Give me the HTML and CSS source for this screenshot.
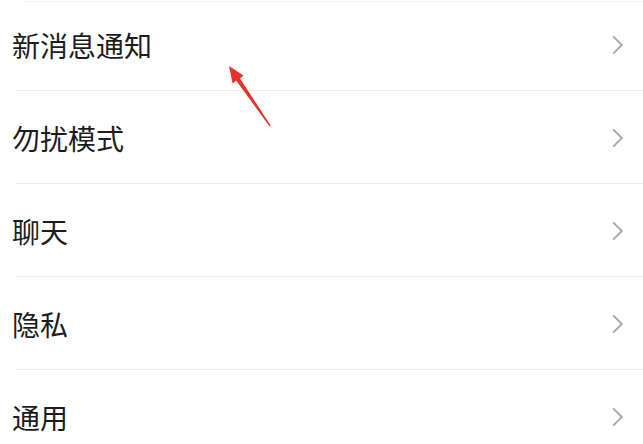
FILE: index.html
```html
<!DOCTYPE html>
<html lang="zh-CN">
<head>
  <meta charset="UTF-8">
  <meta name="viewport" content="width=device-width, initial-scale=1.0">
  <title>设置</title>
  <link rel="stylesheet" href="styles.css">
</head>
<body>
  <!-- 设置列表 -->
  <ul class="settings">
    <li class="item">
      <span class="label">新消息通知</span>
      <svg class="chevron" viewBox="0 0 12 20"><path d="M2 2 L10 10 L2 18"/></svg>
    </li>
    <li class="item">
      <span class="label">勿扰模式</span>
      <svg class="chevron" viewBox="0 0 12 20"><path d="M2 2 L10 10 L2 18"/></svg>
    </li>
    <li class="item">
      <span class="label">聊天</span>
      <svg class="chevron" viewBox="0 0 12 20"><path d="M2 2 L10 10 L2 18"/></svg>
    </li>
    <li class="item">
      <span class="label">隐私</span>
      <svg class="chevron" viewBox="0 0 12 20"><path d="M2 2 L10 10 L2 18"/></svg>
    </li>
    <li class="item">
      <span class="label">通用</span>
      <svg class="chevron" viewBox="0 0 12 20"><path d="M2 2 L10 10 L2 18"/></svg>
    </li>
  </ul>

  <!-- 红色标注箭头 -->
  <svg class="pointer" viewBox="0 0 60 80" width="60" height="80">
    <polygon points="9,6 23.5,15.6 20,18.4 50.6,65.6 49.6,66.4 16.2,20.6 12.6,23.4" fill="#e8312b"/>
  </svg>
</body>
</html>
```

FILE: styles.css
```css
* {
  margin: 0;
  padding: 0;
  box-sizing: border-box;
}
body {
  font-family: "Noto Sans CJK SC", "Noto Sans", sans-serif;
  background: #fff;
  color: #1c1c1c;
  position: relative;
  overflow: hidden;
  height: 444px;
}
.settings {
  list-style: none;
  margin-top: -2px;
  position: relative;
}
/* 顶部残留的淡分割线 */
.settings::before {
  content: "";
  position: absolute;
  left: 24px;
  right: 0;
  top: 3px;
  height: 1px;
  background: #f4f4f4;
}
.item {
  display: flex;
  align-items: center;
  justify-content: space-between;
  height: 93px;
  padding: 0 19px 0 12px;
  position: relative;
}
/* 分割线从左侧 16px 开始 */
.item::after {
  content: "";
  position: absolute;
  left: 16px;
  right: 0;
  bottom: 0;
  height: 1px;
  background: #ebebeb;
}
.label {
  font-size: 28px;
  line-height: 1;
}
.chevron {
  width: 13px;
  height: 22px;
  fill: none;
  stroke: #a6a6a6;
  stroke-width: 1.7;
}
.pointer {
  position: absolute;
  left: 220px;
  top: 60px;
}
```
